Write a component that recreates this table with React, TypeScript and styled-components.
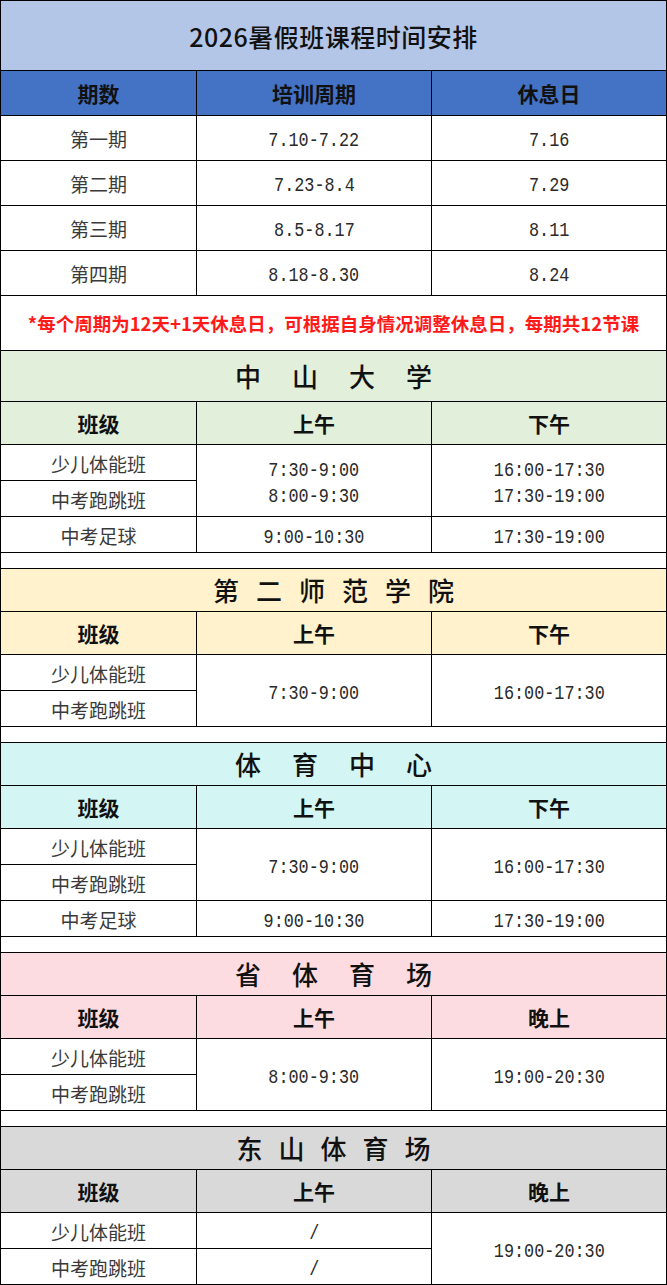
import React from "react";
import styled, { createGlobalStyle } from "styled-components";

const GlobalStyle = createGlobalStyle`
  html, body {
    margin: 0;
    padding: 0;
    background: #fff;
  }
  body {
    font-family: "Noto Sans CJK SC", "Noto Sans", sans-serif;
    color: #222;
  }
`;

const Sheet = styled.div`
  width: 667px;
  box-sizing: border-box;
  border-left: 1px solid #000;
  border-top: 1px solid #000;
`;

const Block = styled.div<{ rows: string }>`
  display: grid;
  grid-template-columns: 196px 235px 235px;
  grid-template-rows: ${(p) => p.rows};
`;

const Cell = styled.div<{
  bg?: string;
  span?: number;
  rowSpan?: number;
}>`
  box-sizing: border-box;
  border-right: 1px solid #000;
  border-bottom: 1px solid #000;
  background: ${(p) => p.bg || "#fff"};
  grid-column: ${(p) => (p.span ? `span ${p.span}` : "auto")};
  grid-row: ${(p) => (p.rowSpan ? `span ${p.rowSpan}` : "auto")};
  display: flex;
  flex-direction: column;
  align-items: center;
  justify-content: center;
  font-size: 19px;
  color: #3a3a3a;
  line-height: 26px;
`;

const BodyText = styled.div`
  padding-top: 2px;
`;

const MainTitle = styled.div`
  font-size: 25px;
  font-weight: 500;
  color: #111;
  letter-spacing: 0.5px;
`;

const HeadText = styled.div`
  font-size: 21px;
  font-weight: 700;
  color: #111;
`;

const Note = styled.div`
  font-size: 18.5px;
  font-weight: 700;
  color: #ff1a1a;
  white-space: nowrap;
`;

const PlaceTitle = styled.div<{ gap: number }>`
  display: flex;
  gap: ${(p) => p.gap}px;
  font-size: 26px;
  font-weight: 500;
  color: #111;
`;

const Num = styled.span`
  display: inline-block;
  font-family: "Liberation Mono", "DejaVu Sans Mono", monospace;
  font-size: 21px;
  color: #2a2a2a;
  transform: translateY(3px) scaleX(0.8);
  line-height: 26px;
`;

const colors = {
  title: "#b4c6e7",
  head: "#4472c4",
  green: "#e2efda",
  yellow: "#fff2cc",
  cyan: "#d3f5f3",
  pink: "#fcdce0",
  grey: "#d9d9d9",
};

const periods = [
  ["第一期", "7.10-7.22", "7.16"],
  ["第二期", "7.23-8.4", "7.29"],
  ["第三期", "8.5-8.17", "8.11"],
  ["第四期", "8.18-8.30", "8.24"],
];

const Place = (props: { name: string; gap: number; bg: string; last: string }) => (
  <>
    <Cell bg={props.bg} span={3}>
      <PlaceTitle gap={props.gap}>
        {props.name.split("").map((c, i) => (
          <span key={i}>{c}</span>
        ))}
      </PlaceTitle>
    </Cell>
    <Cell bg={props.bg}>
      <HeadText>班级</HeadText>
    </Cell>
    <Cell bg={props.bg}>
      <HeadText>上午</HeadText>
    </Cell>
    <Cell bg={props.bg}>
      <HeadText>{props.last}</HeadText>
    </Cell>
  </>
);

const Spacer = () => (
  <Block rows="16px">
    <Cell span={3} />
  </Block>
);

export default function App() {
  return (
    <>
      <GlobalStyle />
      <Sheet>
        <Block rows="70px 45px 45px 45px 45px 45px 55px">
          <Cell bg={colors.title} span={3}>
            <MainTitle>2026暑假班课程时间安排</MainTitle>
          </Cell>
          <Cell bg={colors.head}>
            <HeadText>期数</HeadText>
          </Cell>
          <Cell bg={colors.head}>
            <HeadText>培训周期</HeadText>
          </Cell>
          <Cell bg={colors.head}>
            <HeadText>休息日</HeadText>
          </Cell>
          {periods.map((p) => (
            <React.Fragment key={p[0]}>
              <Cell>
                <BodyText>{p[0]}</BodyText>
              </Cell>
              <Cell>
                <Num>{p[1]}</Num>
              </Cell>
              <Cell>
                <Num>{p[2]}</Num>
              </Cell>
            </React.Fragment>
          ))}
          <Cell span={3}>
            <Note>*每个周期为12天+1天休息日，可根据自身情况调整休息日，每期共12节课</Note>
          </Cell>
        </Block>

        <Block rows="51px 43px 36px 36px 36px">
          <Place name="中山大学" gap={31} bg={colors.green} last="下午" />
          <Cell>
            <BodyText>少儿体能班</BodyText>
          </Cell>
          <Cell rowSpan={2}>
            <Num>7:30-9:00</Num>
            <Num>8:00-9:30</Num>
          </Cell>
          <Cell rowSpan={2}>
            <Num>16:00-17:30</Num>
            <Num>17:30-19:00</Num>
          </Cell>
          <Cell>
            <BodyText>中考跑跳班</BodyText>
          </Cell>
          <Cell>
            <BodyText>中考足球</BodyText>
          </Cell>
          <Cell>
            <Num>9:00-10:30</Num>
          </Cell>
          <Cell>
            <Num>17:30-19:00</Num>
          </Cell>
        </Block>
        <Spacer />

        <Block rows="43px 43px 36px 36px">
          <Place name="第二师范学院" gap={17} bg={colors.yellow} last="下午" />
          <Cell>
            <BodyText>少儿体能班</BodyText>
          </Cell>
          <Cell rowSpan={2}>
            <Num>7:30-9:00</Num>
          </Cell>
          <Cell rowSpan={2}>
            <Num>16:00-17:30</Num>
          </Cell>
          <Cell>
            <BodyText>中考跑跳班</BodyText>
          </Cell>
        </Block>
        <Spacer />

        <Block rows="43px 43px 36px 36px 36px">
          <Place name="体育中心" gap={31} bg={colors.cyan} last="下午" />
          <Cell>
            <BodyText>少儿体能班</BodyText>
          </Cell>
          <Cell rowSpan={2}>
            <Num>7:30-9:00</Num>
          </Cell>
          <Cell rowSpan={2}>
            <Num>16:00-17:30</Num>
          </Cell>
          <Cell>
            <BodyText>中考跑跳班</BodyText>
          </Cell>
          <Cell>
            <BodyText>中考足球</BodyText>
          </Cell>
          <Cell>
            <Num>9:00-10:30</Num>
          </Cell>
          <Cell>
            <Num>17:30-19:00</Num>
          </Cell>
        </Block>
        <Spacer />

        <Block rows="43px 43px 36px 36px">
          <Place name="省体育场" gap={31} bg={colors.pink} last="晚上" />
          <Cell>
            <BodyText>少儿体能班</BodyText>
          </Cell>
          <Cell rowSpan={2}>
            <Num>8:00-9:30</Num>
          </Cell>
          <Cell rowSpan={2}>
            <Num>19:00-20:30</Num>
          </Cell>
          <Cell>
            <BodyText>中考跑跳班</BodyText>
          </Cell>
        </Block>
        <Spacer />

        <Block rows="43px 43px 36px 36px">
          <Place name="东山体育场" gap={16} bg={colors.grey} last="晚上" />
          <Cell>
            <BodyText>少儿体能班</BodyText>
          </Cell>
          <Cell>
            <Num>/</Num>
          </Cell>
          <Cell rowSpan={2}>
            <Num>19:00-20:30</Num>
          </Cell>
          <Cell>
            <BodyText>中考跑跳班</BodyText>
          </Cell>
          <Cell>
            <Num>/</Num>
          </Cell>
        </Block>
      </Sheet>
    </>
  );
}
